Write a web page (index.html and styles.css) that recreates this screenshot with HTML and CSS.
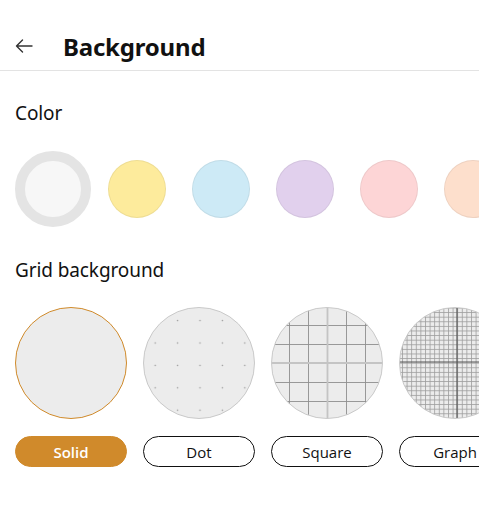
FILE: index.html
```html
<!DOCTYPE html>
<html lang="en">
<head>
    <meta charset="UTF-8">
    <meta name="viewport" content="width=device-width, initial-scale=1.0">
    <title>Background</title>
    <link rel="stylesheet" href="styles.css">
</head>
<body>
    <!-- Cabeçalho com botão de voltar -->
    <header class="page-header">
        <button class="back-button" aria-label="Back">
            <svg width="18" height="14" viewBox="0 0 18 14">
                <path d="M17 7H1.5M7.5 1L1.5 7l6 6" fill="none" stroke="#333" stroke-width="1.4" stroke-linecap="round" stroke-linejoin="round"/>
            </svg>
        </button>
        <h1 class="page-title">Background</h1>
    </header>

    <!-- Cores do fundo -->
    <section class="section">
        <h2 class="section-title">Color</h2>
        <div class="color-row">
            <div class="color-slot"><div class="color-swatch selected"></div></div>
            <div class="color-slot"><div class="color-swatch yellow"></div></div>
            <div class="color-slot"><div class="color-swatch blue"></div></div>
            <div class="color-slot"><div class="color-swatch purple"></div></div>
            <div class="color-slot"><div class="color-swatch pink"></div></div>
            <div class="color-slot"><div class="color-swatch peach"></div></div>
        </div>
    </section>

    <!-- Tipos de grade -->
    <section class="section">
        <h2 class="section-title">Grid background</h2>
        <div class="grid-row">
            <div class="grid-option">
                <svg class="grid-preview" viewBox="0 0 112 112">
                    <circle cx="56" cy="56" r="55.5" fill="#ececec" stroke="#d08a2a" stroke-width="1"/>
                </svg>
                <button class="grid-button active">Solid</button>
            </div>

            <div class="grid-option">
                <svg class="grid-preview" viewBox="0 0 112 112">
                    <defs>
                        <clipPath id="clip-dot"><circle cx="56" cy="56" r="55"/></clipPath>
                        <pattern id="dots" x="1" y="2.4" width="22.4" height="22.4" patternUnits="userSpaceOnUse">
                            <circle cx="11.2" cy="11.2" r="0.8" fill="#999"/>
                        </pattern>
                    </defs>
                    <circle cx="56" cy="56" r="55.5" fill="#ececec" stroke="#c9c9c9" stroke-width="1"/>
                    <rect width="112" height="112" fill="url(#dots)" clip-path="url(#clip-dot)"/>
                </svg>
                <button class="grid-button">Dot</button>
            </div>

            <div class="grid-option">
                <svg class="grid-preview" viewBox="0 0 112 112">
                    <defs>
                        <clipPath id="clip-square"><circle cx="56" cy="56" r="55"/></clipPath>
                    </defs>
                    <circle cx="56" cy="56" r="55.5" fill="#ececec" stroke="#c9c9c9" stroke-width="1"/>
                    <g clip-path="url(#clip-square)" stroke="#8e8e8e" stroke-width="0.9">
                        <path d="M18.5 0V112M37.5 0V112M75.5 0V112M94.5 0V112M0 18.5H112M0 37.5H112M0 75.5H112M0 94.5H112"/>
                        <path d="M56.5 0V112M0 56H112" stroke="#c4c4c4" stroke-width="1.8"/>
                    </g>
                </svg>
                <button class="grid-button">Square</button>
            </div>

            <div class="grid-option">
                <svg class="grid-preview" viewBox="0 0 112 112">
                    <defs>
                        <clipPath id="clip-graph"><circle cx="56" cy="56" r="55"/></clipPath>
                        <pattern id="fine" x="3" y="0.5" width="4.6" height="4.6" patternUnits="userSpaceOnUse">
                            <path d="M0 0.5H4.6M0.5 0V4.6" stroke="#9c9c9c" stroke-width="0.8"/>
                        </pattern>
                    </defs>
                    <circle cx="56" cy="56" r="55.5" fill="#ececec" stroke="#c9c9c9" stroke-width="1"/>
                    <g clip-path="url(#clip-graph)">
                        <rect width="112" height="112" fill="url(#fine)"/>
                        <path d="M58 0V112M0 55H112" stroke="#555" stroke-width="1.2"/>
                    </g>
                </svg>
                <button class="grid-button">Graph</button>
            </div>
        </div>
    </section>
</body>
</html>
```

FILE: styles.css
```css
/* Estilos principais */
html, body {
    margin: 0;
    padding: 0;
    background: #ffffff;
    overflow: hidden;
}

body {
    font-family: "Noto Sans", "Open Sans", sans-serif;
    color: #111;
}

/* Cabeçalho */
.page-header {
    height: 71px;
    display: flex;
    align-items: center;
    gap: 30px;
    padding: 23px 15px 0 15px;
    border-bottom: 1px solid #e3e3e3;
    box-sizing: border-box;
}

.back-button {
    display: flex;
    align-items: center;
    padding: 0;
    margin: 0 0 2px 0;
    border: none;
    background: none;
    cursor: pointer;
}

.page-title {
    margin: 0 0 1px 0;
    font-size: 24px;
    font-weight: 700;
    letter-spacing: -0.2px;
}

/* Secções */
.section {
    padding: 0 15px;
}

.section-title {
    margin: 0;
    font-size: 19px;
    font-weight: 400;
    line-height: 26px;
    letter-spacing: -0.1px;
}

.section:first-of-type .section-title {
    margin-top: 29px;
}

.section:last-of-type .section-title {
    margin-top: 30px;
}

/* Linha de cores */
.color-row {
    display: flex;
    gap: 8px;
    margin-top: 25px;
}

.color-slot {
    flex: none;
    width: 76px;
    height: 76px;
    display: flex;
    align-items: center;
    justify-content: center;
}

.color-swatch {
    width: 58px;
    height: 58px;
    border-radius: 50%;
    box-sizing: border-box;
    border: 1px solid rgba(0, 0, 0, 0.06);
}

.color-swatch.selected {
    width: 76px;
    height: 76px;
    background: #f7f7f7;
    border: 10px solid #e4e4e4;
}

.yellow { background: #fdeb9c; }
.blue { background: #cdeaf6; }
.purple { background: #e1d0ed; }
.pink { background: #fdd5d6; }
.peach { background: #fddfcc; }

/* Linha de grades */
.grid-row {
    display: flex;
    gap: 16px;
    margin-top: 24px;
}

.grid-option {
    flex: none;
    width: 112px;
    display: flex;
    flex-direction: column;
    gap: 17px;
}

.grid-preview {
    display: block;
    width: 112px;
    height: 112px;
}

.grid-button {
    height: 31px;
    border-radius: 16px;
    border: 1.3px solid #111;
    background: #fff;
    font-family: "Open Sans", "Noto Sans", sans-serif;
    font-size: 15px;
    font-weight: 500;
    color: #111;
    padding: 0;
    cursor: pointer;
}

.grid-button.active {
    background: #d08a2b;
    border-color: #d08a2b;
    color: #fff;
    font-weight: 600;
}
```
